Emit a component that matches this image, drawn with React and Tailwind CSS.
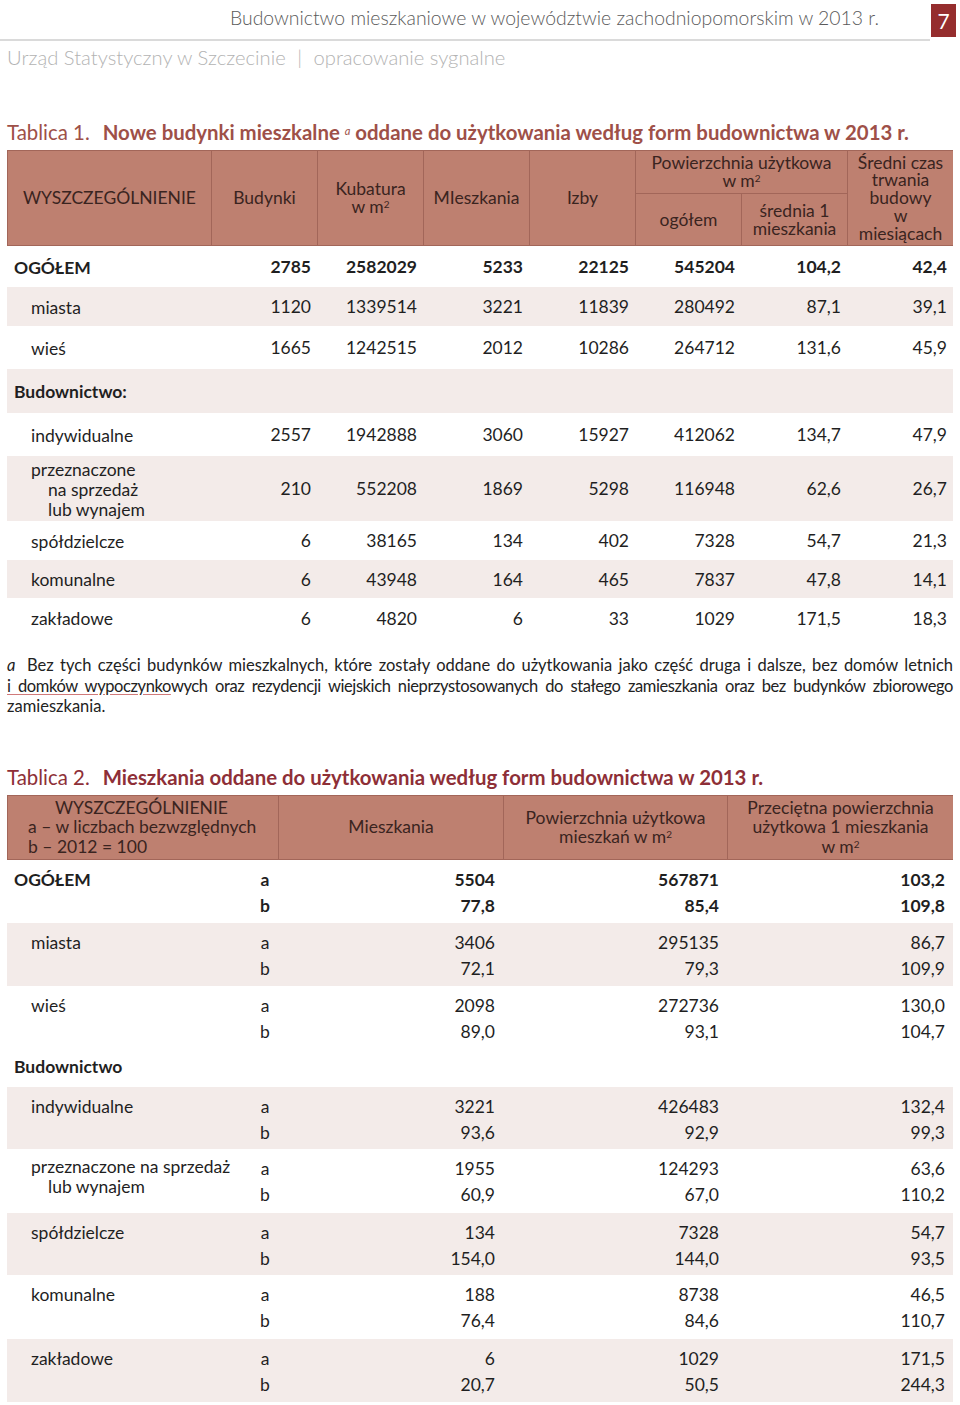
import React from 'react';

const t1Rows = [
  { label: ['OGÓŁEM'], bold: true, h: 'h-[41px]', vals: ['2785', '2582029', '5233', '22125', '545204', '104,2', '42,4'] },
  { label: ['miasta'], shade: true, h: 'h-[39px]', vals: ['1120', '1339514', '3221', '11839', '280492', '87,1', '39,1'] },
  { label: ['wieś'], h: 'h-[43px]', vals: ['1665', '1242515', '2012', '10286', '264712', '131,6', '45,9'] },
  { label: ['Budownictwo:'], bold: true, shade: true, h: 'h-[44px]', vals: [] },
  { label: ['indywidualne'], h: 'h-[43px]', vals: ['2557', '1942888', '3060', '15927', '412062', '134,7', '47,9'] },
  { label: ['przeznaczone', 'na sprzedaż', 'lub wynajem'], shade: true, h: 'h-[65px]', vals: ['210', '552208', '1869', '5298', '116948', '62,6', '26,7'] },
  { label: ['spółdzielcze'], h: 'h-[39px]', vals: ['6', '38165', '134', '402', '7328', '54,7', '21,3'] },
  { label: ['komunalne'], shade: true, h: 'h-[38px]', vals: ['6', '43948', '164', '465', '7837', '47,8', '14,1'] },
  { label: ['zakładowe'], h: 'h-[40px]', vals: ['6', '4820', '6', '33', '1029', '171,5', '18,3'] },
];

const t2Rows = [
  { label: ['OGÓŁEM'], bold: true, h: 'h-[63px]', a: ['5504', '567871', '103,2'], b: ['77,8', '85,4', '109,8'] },
  { label: ['miasta'], shade: true, h: 'h-[63px]', a: ['3406', '295135', '86,7'], b: ['72,1', '79,3', '109,9'] },
  { label: ['wieś'], h: 'h-[63px]', a: ['2098', '272736', '130,0'], b: ['89,0', '93,1', '104,7'] },
  { section: 'Budownictwo' },
  { label: ['indywidualne'], shade: true, h: 'h-[62px]', a: ['3221', '426483', '132,4'], b: ['93,6', '92,9', '99,3'] },
  { label: ['przeznaczone na sprzedaż', 'lub wynajem'], h: 'h-[64px]', a: ['1955', '124293', '63,6'], b: ['60,9', '67,0', '110,2'] },
  { label: ['spółdzielcze'], shade: true, h: 'h-[62px]', a: ['134', '7328', '54,7'], b: ['154,0', '144,0', '93,5'] },
  { label: ['komunalne'], h: 'h-[64px]', a: ['188', '8738', '46,5'], b: ['76,4', '84,6', '110,7'] },
  { label: ['zakładowe'], shade: true, h: 'h-[63px]', a: ['6', '1029', '171,5'], b: ['20,7', '50,5', '244,3'] },
];

const HCell = ({ className = '', children }) => (
  <div className={`bg-[#be8070] flex flex-col items-center justify-center text-center ${className}`}>
    {children}
  </div>
);

const Sq = () => <sup className="text-[10px]">2</sup>;

const Table1Row = ({ row }) => {
  const bold = row.bold ? 'font-bold' : '';
  return (
    <div className={`grid grid-cols-[205px_106px_106px_106px_106px_106px_106px_106px] items-center pt-[2px] ${row.h} ${row.shade ? 'bg-[#f3ebe9]' : ''} ${bold}`}>
      <div className={`leading-[20px] ${row.bold ? 'pl-[7px]' : 'pl-[24px]'}`}>
        {row.label.map((l, i) => (
          <div key={l} className={i > 0 ? 'pl-[17px]' : ''}>{l}</div>
        ))}
      </div>
      {row.vals.map((v, i) => (
        <div key={i} className="text-right pr-[7px]">{v}</div>
      ))}
    </div>
  );
};

const Table2Row = ({ row }) => {
  if (row.section) {
    return <div className="h-[38px] flex items-center pl-[7px] font-bold">{row.section}</div>;
  }
  const two = row.label.length > 1;
  return (
    <div className={`grid grid-cols-[243px_30px_222px_225px_226px] ${row.h} ${row.shade ? 'bg-[#f3ebe9]' : ''} ${row.bold ? 'font-bold' : ''}`}>
      <div className={`${row.bold ? 'pl-[7px]' : 'pl-[24px]'} ${two ? 'pt-[8px] leading-[20px]' : 'pt-[7px] leading-[26px]'}`}>
        {row.label.map((l, i) => (
          <div key={l} className={i > 0 ? 'pl-[17px]' : ''}>{l}</div>
        ))}
      </div>
      <div className="pt-[7px] leading-[26px] text-center">
        <div>a</div>
        <div>b</div>
      </div>
      {row.a.map((v, i) => (
        <div key={i} className={`pt-[7px] leading-[26px] text-right ${i === 0 ? 'pr-[7px]' : 'pr-[8px]'}`}>
          <div>{v}</div>
          <div>{row.b[i]}</div>
        </div>
      ))}
    </div>
  );
};

const App = () => {
  return (
    <div className="w-[960px] min-h-[1405px] bg-white [font-family:Lato,'Open_Sans',sans-serif] text-[#1f1f1f]">
      {/* running header */}
      <div className="flex h-[41px]">
        <div className="w-[930px] border-b-2 border-[#dadada] flex items-center justify-end pr-[51px] pb-[4px] text-[19.4px] font-light text-[#5a5a5a]">
          Budownictwo mieszkaniowe w województwie zachodniopomorskim w 2013 r.
        </div>
        <div className="mt-[4px] ml-px w-[25px] h-[33px] bg-[#952d2e] text-white text-[21px] flex items-center justify-center">
          7
        </div>
      </div>
      <div className="mt-[4px] pl-[7px] leading-[24px] text-[20.2px] font-light text-[#b3b3b3]">
        Urząd Statystyczny w Szczecinie <span className="mx-[6px]">|</span> opracowanie sygnalne
      </div>

      {/* Tablica 1 */}
      <div className="px-[7px]">
        <div className="mt-[51px] leading-[24px] text-[20.4px] text-[#9e5048]">
          <span>Tablica 1.</span>
          <span className="ml-[13px] font-bold">
            Nowe budynki mieszkalne <sup className="italic font-normal text-[11px]">a</sup> oddane do użytkowania według form budownictwa w 2013 r.
          </span>
        </div>

        <div className="mt-[6px] grid grid-cols-[203px_105px_105px_105px_105px_105px_105px_105px] grid-rows-[42px_51px] gap-px p-px bg-[#a26659] text-[17.5px] leading-[17.7px] text-[#3a2420]">
          <HCell className="row-span-2">WYSZCZEGÓLNIENIE</HCell>
          <HCell className="row-span-2">Budynki</HCell>
          <HCell className="row-span-2">
            <span>Kubatura</span>
            <span>w m<Sq /></span>
          </HCell>
          <HCell className="row-span-2">MIeszkania</HCell>
          <HCell className="row-span-2">Izby</HCell>
          <HCell className="col-span-2">
            <span>Powierzchnia użytkowa</span>
            <span>w m<Sq /></span>
          </HCell>
          <HCell className="row-span-2">
            <span>Średni czas</span>
            <span>trwania</span>
            <span>budowy</span>
            <span>w</span>
            <span>miesiącach</span>
          </HCell>
          <HCell>ogółem</HCell>
          <HCell>
            <span>średnia 1</span>
            <span>mieszkania</span>
          </HCell>
        </div>

        <div className="text-[17.5px]">
          {t1Rows.map(row => (
            <Table1Row key={row.label[0]} row={row} />
          ))}
        </div>

        {/* footnote */}
        <div className="mt-[17px] text-[16.5px] leading-[20.5px] text-[#222]">
          <div className="text-justify [text-align-last:justify]">
            <i className="inline-block w-[20px]">a</i>Bez tych części budynków mieszkalnych, które zostały oddane do użytkowania jako część druga i dalsze, bez domów letnich
          </div>
          <div className="text-justify [text-align-last:justify] tracking-[-0.4px]">
            <span className="underline decoration-[#d07a7a] underline-offset-2">i domków wypoczynko</span>wych oraz rezydencji wiejskich nieprzystosowanych do stałego zamieszkania oraz bez budynków zbiorowego
          </div>
          <div>zamieszkania.</div>
        </div>

        {/* Tablica 2 */}
        <div className="mt-[48px] leading-[24px] text-[20.4px] text-[#8e2f37]">
          <span>Tablica 2.</span>
          <span className="ml-[13px] font-bold">Mieszkania oddane do użytkowania według form budownictwa w 2013 r.</span>
        </div>

        <div className="mt-[6px] grid grid-cols-[270px_224px_223px_225px] h-[65px] gap-px p-px bg-[#a26659] text-[17.5px] leading-[19.5px] text-[#3a2420]">
          <HCell className="!items-start pl-[20px]">
            <span className="pl-[27px]">WYSZCZEGÓLNIENIE</span>
            <span>a – w liczbach bezwzględnych</span>
            <span>b – 2012 = 100</span>
          </HCell>
          <HCell>Mieszkania</HCell>
          <HCell>
            <span>Powierzchnia użytkowa</span>
            <span>mieszkań w m<Sq /></span>
          </HCell>
          <HCell>
            <span>Przeciętna powierzchnia</span>
            <span>użytkowa 1 mieszkania</span>
            <span>w m<Sq /></span>
          </HCell>
        </div>

        <div className="text-[17.5px]">
          {t2Rows.map((row, i) => (
            <Table2Row key={i} row={row} />
          ))}
        </div>
      </div>
    </div>
  );
};

export default App;
